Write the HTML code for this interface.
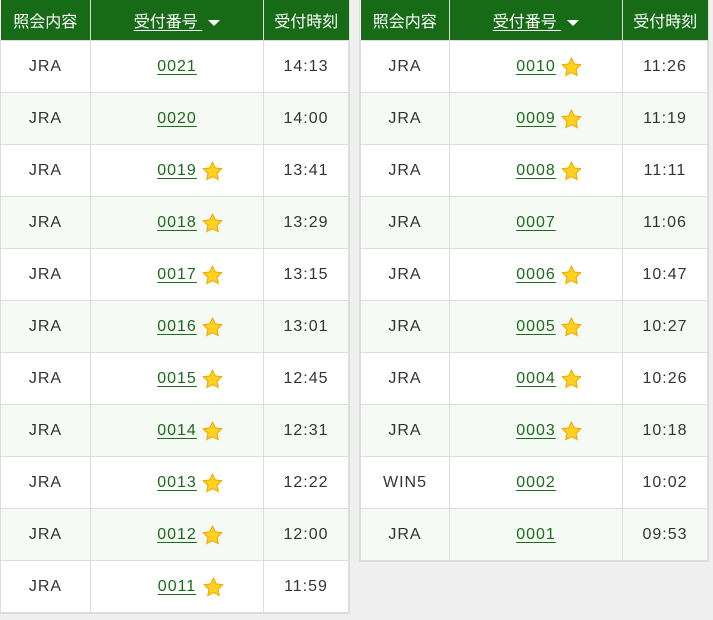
<!DOCTYPE html>
<html><head><meta charset="utf-8"><style>
body{margin:0;background:#efefef;width:713px;height:620px;overflow:hidden;font-family:"Liberation Sans","Noto Sans CJK JP",sans-serif;}
table{position:absolute;top:0;border-collapse:collapse;table-layout:fixed;background:#fff;box-shadow:0 0 0 1px #ddd;}
th{background:#176b17;color:#fff;font-weight:normal;font-size:16px;height:40px;padding:0;border-left:1px solid #ddd;}
th:first-child{border-left:none}
th u{text-decoration:underline;text-underline-offset:3px}
td{height:51px;border:1px solid #ddd;text-align:center;font-size:16px;color:#333;padding:0;letter-spacing:1px;}
tr:nth-child(odd) td{background:#f5faf5}
a{color:#1a6b1a;text-decoration:underline;text-underline-offset:3px;position:relative;}
svg.st{position:absolute;left:45px;top:-1px;}
.tri{display:inline-block;width:0;height:0;border-left:6px solid transparent;border-right:6px solid transparent;border-top:6px solid #fff;margin-left:6px;vertical-align:middle}
</style></head><body>
<svg width="0" height="0" style="position:absolute"><defs><symbol id="star" viewBox="0 0 20 20"><path d="M10 1l2.7 5.6 6.1.8-4.5 4.2 1.1 6.1L10 14.8l-5.4 2.9 1.1-6.1L1.2 7.4l6.1-.8z" fill="#ffd21f" stroke="#f0a500" stroke-width="1"/></symbol></defs></svg>
<table style="left:0;width:348px">
<colgroup><col style="width:90px"><col style="width:173px"><col style="width:85px"></colgroup>
<tr><th>照会内容</th><th><u>受付番号 </u><span class="tri"></span></th><th>受付時刻</th></tr>
<tr><td>JRA</td><td><a>0021</a></td><td>14:13</td></tr>
<tr><td>JRA</td><td><a>0020</a></td><td>14:00</td></tr>
<tr><td>JRA</td><td><a>0019<svg class="st" width="21" height="21"><use href="#star"/></svg></a></td><td>13:41</td></tr>
<tr><td>JRA</td><td><a>0018<svg class="st" width="21" height="21"><use href="#star"/></svg></a></td><td>13:29</td></tr>
<tr><td>JRA</td><td><a>0017<svg class="st" width="21" height="21"><use href="#star"/></svg></a></td><td>13:15</td></tr>
<tr><td>JRA</td><td><a>0016<svg class="st" width="21" height="21"><use href="#star"/></svg></a></td><td>13:01</td></tr>
<tr><td>JRA</td><td><a>0015<svg class="st" width="21" height="21"><use href="#star"/></svg></a></td><td>12:45</td></tr>
<tr><td>JRA</td><td><a>0014<svg class="st" width="21" height="21"><use href="#star"/></svg></a></td><td>12:31</td></tr>
<tr><td>JRA</td><td><a>0013<svg class="st" width="21" height="21"><use href="#star"/></svg></a></td><td>12:22</td></tr>
<tr><td>JRA</td><td><a>0012<svg class="st" width="21" height="21"><use href="#star"/></svg></a></td><td>12:00</td></tr>
<tr><td>JRA</td><td><a>0011<svg class="st" width="21" height="21"><use href="#star"/></svg></a></td><td>11:59</td></tr>
</table>
<table style="left:360px;width:347px">
<colgroup><col style="width:89px"><col style="width:173px"><col style="width:85px"></colgroup>
<tr><th>照会内容</th><th><u>受付番号 </u><span class="tri"></span></th><th>受付時刻</th></tr>
<tr><td>JRA</td><td><a>0010<svg class="st" width="21" height="21"><use href="#star"/></svg></a></td><td>11:26</td></tr>
<tr><td>JRA</td><td><a>0009<svg class="st" width="21" height="21"><use href="#star"/></svg></a></td><td>11:19</td></tr>
<tr><td>JRA</td><td><a>0008<svg class="st" width="21" height="21"><use href="#star"/></svg></a></td><td>11:11</td></tr>
<tr><td>JRA</td><td><a>0007</a></td><td>11:06</td></tr>
<tr><td>JRA</td><td><a>0006<svg class="st" width="21" height="21"><use href="#star"/></svg></a></td><td>10:47</td></tr>
<tr><td>JRA</td><td><a>0005<svg class="st" width="21" height="21"><use href="#star"/></svg></a></td><td>10:27</td></tr>
<tr><td>JRA</td><td><a>0004<svg class="st" width="21" height="21"><use href="#star"/></svg></a></td><td>10:26</td></tr>
<tr><td>JRA</td><td><a>0003<svg class="st" width="21" height="21"><use href="#star"/></svg></a></td><td>10:18</td></tr>
<tr><td>WIN5</td><td><a>0002</a></td><td>10:02</td></tr>
<tr><td>JRA</td><td><a>0001</a></td><td>09:53</td></tr>
</table>
</body></html>
